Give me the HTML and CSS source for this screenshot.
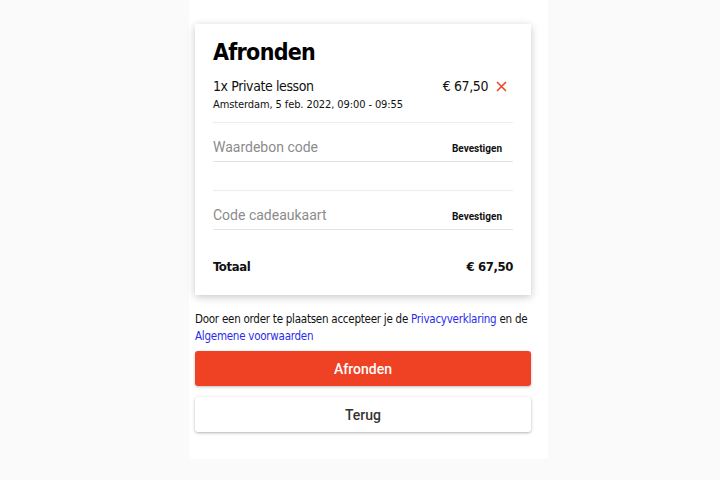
FILE: index.html
```html
<!DOCTYPE html>
<html lang="nl">
<head>
    <meta charset="UTF-8">
    <meta name="viewport" content="width=device-width, initial-scale=1.0">
    <title>Afronden</title>
    <link rel="stylesheet" href="styles.css">
</head>
<body>
    <div class="checkout">
        <div class="summary-card">
            <h1>Afronden</h1>

            <!-- product regel -->
            <div class="order-line">
                <div class="order-line-row">
                    <span class="product-name">1x Private lesson</span>
                    <span class="product-price">€ 67,50
                        <svg class="remove-icon" width="11" height="11" viewBox="0 0 11 11">
                            <path d="M1 1L10 10M10 1L1 10" stroke="#f0442c" stroke-width="1.6" fill="none"/>
                        </svg>
                    </span>
                </div>
                <div class="order-line-info">Amsterdam, 5 feb. 2022, 09:00 - 09:55</div>
            </div>

            <!-- waardebon -->
            <div class="code-field">
                <input type="text" placeholder="Waardebon code">
                <button type="button" class="confirm-button">Bevestigen</button>
            </div>

            <!-- cadeaukaart -->
            <div class="code-block">
                <div class="code-field">
                    <input type="text" placeholder="Code cadeaukaart">
                    <button type="button" class="confirm-button">Bevestigen</button>
                </div>
            </div>

            <div class="total-row">
                <span>Totaal</span>
                <span>€ 67,50</span>
            </div>
        </div>

        <p class="terms">
            Door een order te plaatsen accepteer je de <a href="#">Privacyverklaring</a> en de
            <a href="#">Algemene voorwaarden</a>
        </p>

        <button type="button" class="main-button">Afronden</button>
        <button type="button" class="back-button">Terug</button>
    </div>
</body>
</html>
```

FILE: styles.css
```css
/* basis */
body {
    margin: 0;
    background-color: #fafafa;
    font-family: "DejaVu Sans Condensed", sans-serif;
    color: #111111;
}

.checkout {
    width: 336px;
    margin: 0 0 0 189px;
    padding: 24px 17px 27px 6px;
    background-color: #ffffff;
}

/* overzicht kaart */
.summary-card {
    background-color: #ffffff;
    padding: 10px 18px 19px 18px;
    box-shadow: 0 2px 8px rgba(0, 0, 0, 0.22);
}

h1 {
    margin: 0;
    font-size: 23px;
    line-height: 36px;
    font-weight: bold;
    letter-spacing: -0.7px;
    color: #000000;
}

.order-line {
    padding: 6px 0 10px 0;
    border-bottom: 1px solid #ececec;
}

.order-line-row {
    display: flex;
    justify-content: space-between;
    align-items: center;
    font-size: 14px;
    line-height: 20px;
    letter-spacing: -0.4px;
}

.product-price {
    display: flex;
    align-items: center;
    gap: 8px;
    padding-right: 6px;
}

.order-line-info {
    margin-top: 2px;
    font-size: 11px;
    line-height: 14px;
    letter-spacing: -0.1px;
}

.code-field {
    display: flex;
    align-items: center;
    height: 38px;
    border-bottom: 1px solid #e3e3e3;
}

.code-field input {
    flex: 1;
    border: none;
    outline: none;
    padding: 0;
    margin-top: 10px;
    font-family: Roboto, sans-serif;
    font-size: 14px;
    color: #333333;
    background: transparent;
}

.code-field input::placeholder {
    color: #8c8c8c;
}

.confirm-button {
    border: none;
    background: none;
    padding: 0 11px 0 0;
    margin-top: 12px;
    font-family: Roboto, sans-serif;
    font-size: 10px;
    font-weight: bold;
    color: #111111;
    cursor: pointer;
}

.code-block {
    margin-top: 28px;
    border-top: 1px solid #ececec;
}

.total-row {
    display: flex;
    justify-content: space-between;
    padding-top: 28px;
    font-size: 13px;
    line-height: 18px;
    font-weight: bold;
    letter-spacing: -0.4px;
}

/* voorwaarden */
.terms {
    margin: 16px 0 6px 0;
    font-size: 11.5px;
    line-height: 17px;
    letter-spacing: -0.25px;
}

.terms a {
    color: #2b2bea;
    text-decoration: none;
}

/* knoppen */
.main-button,
.back-button {
    display: block;
    width: 100%;
    height: 35px;
    border: none;
    border-radius: 3px;
    font-family: Roboto, sans-serif;
    font-size: 14px;
    font-weight: 500;
    cursor: pointer;
}

.main-button {
    background-color: #ef4123;
    color: #ffffff;
    box-shadow: 0 1px 3px rgba(0, 0, 0, 0.25);
}

.back-button {
    margin-top: 11px;
    background-color: #ffffff;
    color: #333333;
    box-shadow: 0 1px 3px rgba(0, 0, 0, 0.3);
}
```
